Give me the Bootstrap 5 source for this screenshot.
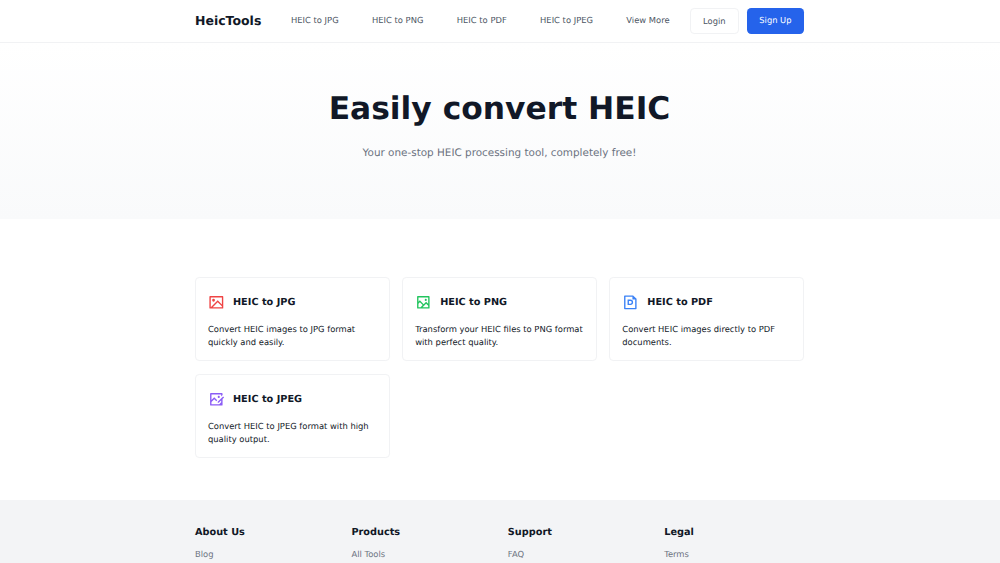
<!DOCTYPE html>
<html lang="en">
<head>
  <meta charset="UTF-8">
  <meta name="viewport" content="width=device-width, initial-scale=1">
  <title>HeicTools</title>
  <!-- Bootstrap CSS -->
  <link href="https://cdn.jsdelivr.net/npm/bootstrap@5.3.0/dist/css/bootstrap.min.css" rel="stylesheet">
  <style>
    /* compact rem, all sizes below scale with it */
    html { font-size: 8.3333px; overflow: hidden; }
    body { font-family: "DejaVu Sans", sans-serif; font-size: 1.006rem; color: #111827; background: #fff; text-rendering: geometricPrecision; padding-right: 1px; }
    a { text-decoration: none; }
    .page-width { width: 609px; margin: 0 auto; }
    .site-header, .hero, .site-footer { margin-right: -1px; padding-right: 1px !important; }
    .site-header { border-bottom: 1px solid #f1f2f4; height: 43px; padding: 8px 0; }
    .brand { font-size: 1.5rem; font-weight: 700; color: #111827; line-height: 3.1rem; width: 11.52rem; }
    .menu-links { gap: 4rem; line-height: 1.5; padding-top: .75rem; }
    .menu-links a { color: #4b5563; white-space: nowrap; }
    .header-actions { gap: 1rem; }
    .btn-login, .btn-signup { font-size: 1rem; line-height: 1.5; border-radius: .5rem; }
    .btn-login { color: #4b5563; border: 1px solid #f1f2f4; padding: .7rem 1.44rem; }
    .btn-signup { color: #fff; background: #2563eb; border: 0; padding: .75rem 1.5rem; }
    .hero { height: 175.6px; padding: 42.6px 0 0; background: linear-gradient(#fff, #f9fafb); }
    .hero h1 { font-size: 3.76rem; font-weight: 700; line-height: 1.5; margin-bottom: 1.5rem; }
    .hero p { font-size: 1.25rem; line-height: 2rem; color: #6b7280; }
    .tools { padding: 7rem 0 0; height: 281.4px; }
    .tool-grid { display: grid; grid-template-columns: repeat(3, 1fr); gap: 1.5rem; }
    .tool-card { border: 1px solid #f1f2f4; border-radius: .5rem; padding: 1.44rem; height: 10.14rem; color: #111827; }
    .tool-head { height: 3rem; gap: 1rem; margin-bottom: 1rem; }
    .tool-head svg { width: 2rem; height: 2rem; }
    .tool-head h2, .site-footer h3 { font-size: 1.17rem; font-weight: 700; line-height: 1.5; margin: 0; }
    .tool-head h2 { padding-top: 1px; }
    .site-footer { background: #f3f4f6; padding: 3.1rem 0 3rem; }
    .footer-grid { display: grid; grid-template-columns: repeat(4, 1fr); gap: 2rem; }
    .site-footer h3 { margin-bottom: .85rem; }
    .site-footer a { color: #6b7280; }
    .icon-red { color: #ef4444; }
    .icon-green { color: #22c55e; }
    .icon-blue { color: #3b82f6; }
    .icon-purple { color: #8b5cf6; }
  </style>
</head>
<body>
  <!-- Header -->
  <header class="site-header">
    <div class="page-width d-flex align-items-start">
      <a class="brand" href="#">HeicTools</a>
      <nav class="menu-links d-flex">
        <a href="#">HEIC to JPG</a>
        <a href="#">HEIC to PNG</a>
        <a href="#">HEIC to PDF</a>
        <a href="#">HEIC to JPEG</a>
        <a href="#">View More</a>
      </nav>
      <div class="d-flex ms-auto header-actions">
        <a class="btn btn-login" href="#">Login</a>
        <a class="btn btn-signup" href="#">Sign Up</a>
      </div>
    </div>
  </header>

  <!-- Hero -->
  <section class="hero text-center">
    <h1>Easily convert HEIC</h1>
    <p class="mb-0">Your one-stop HEIC processing tool, completely free!</p>
  </section>

  <!-- Tools -->
  <main class="tools">
    <div class="page-width tool-grid">
      <a class="tool-card" href="#">
        <div class="tool-head d-flex align-items-center">
          <svg class="icon-red" viewBox="0 0 24 24" fill="currentColor"><path d="M4.828 21l-.02.02-.021-.02H2.992A.993.993 0 0 1 2 20.007V3.993A1 1 0 0 1 2.992 3h18.016c.548 0 .992.445.992.993v16.014a1 1 0 0 1-.992.993H4.828zM20 15V5H4v14L14 9l6 6zm0 2.828l-6-6L6.828 19H20v-1.172zM8 11a2 2 0 1 1 0-4 2 2 0 0 1 0 4z"/></svg>
          <h2>HEIC to JPG</h2>
        </div>
        <p class="mb-0">Convert HEIC images to JPG format quickly and easily.</p>
      </a>
      <a class="tool-card" href="#">
        <div class="tool-head d-flex align-items-center">
          <svg class="icon-green" viewBox="0 0 24 24" fill="currentColor"><path d="M5 11.1l2-2 5.5 5.5 3.5-3.5 3 3V5H5v6.1zm0 2.829V19h3.1l2.986-2.985L7 11.929l-2 2zM10.929 19H19v-2.071l-3-3L10.929 19zM4 3h16a1 1 0 0 1 1 1v16a1 1 0 0 1-1 1H4a1 1 0 0 1-1-1V4a1 1 0 0 1 1-1zm11.5 7a1.5 1.5 0 1 1 0-3 1.5 1.5 0 0 1 0 3z"/></svg>
          <h2>HEIC to PNG</h2>
        </div>
        <p class="mb-0">Transform your HEIC files to PNG format with perfect quality.</p>
      </a>
      <a class="tool-card" href="#">
        <div class="tool-head d-flex align-items-center">
          <svg class="icon-blue" viewBox="0 0 24 24" fill="currentColor"><path d="M12 16H8V8h4a4 4 0 1 1 0 8zm-2-6v4h2a2 2 0 1 0 0-4h-2zm5-6H5v16h14V8h-4V4zM3 2.992C3 2.444 3.447 2 3.999 2H16l5 5v13.993A1 1 0 0 1 20.007 22H3.993A1 1 0 0 1 3 21.008V2.992z"/></svg>
          <h2>HEIC to PDF</h2>
        </div>
        <p class="mb-0">Convert HEIC images directly to PDF documents.</p>
      </a>
      <a class="tool-card" href="#">
        <div class="tool-head d-flex align-items-center">
          <svg class="icon-purple" viewBox="0 0 24 24" fill="currentColor"><path d="M20 3c.552 0 1 .448 1 1v1.757l-2 2V5H5v8.1l4-4 4.328 4.329-1.415 1.413L9 11.93l-4 3.999V19h10.533l.708.001 1.329-1.33L18.9 16.34l.1-.1v-2.93l2-2V20c0 .55-.45 1-1 1H4c-.55 0-1-.45-1-1V4c0-.552.448-1 1-1h16zm1.778 4.808l1.414 1.414L15.414 17l-1.416-.002.002-1.412 7.778-7.778zM15.5 7c.828 0 1.5.672 1.5 1.5s-.672 1.5-1.5 1.5S14 9.328 14 8.5 14.672 7 15.5 7z"/></svg>
          <h2>HEIC to JPEG</h2>
        </div>
        <p class="mb-0">Convert HEIC to JPEG format with high quality output.</p>
      </a>
    </div>
  </main>

  <!-- Footer -->
  <footer class="site-footer">
    <div class="page-width footer-grid">
      <div>
        <h3>About Us</h3>
        <a href="#">Blog</a>
      </div>
      <div>
        <h3>Products</h3>
        <a href="#">All Tools</a>
      </div>
      <div>
        <h3>Support</h3>
        <a href="#">FAQ</a>
      </div>
      <div>
        <h3>Legal</h3>
        <a href="#">Terms</a>
      </div>
    </div>
  </footer>

  <!-- Bootstrap JS Bundle -->
  <script src="https://cdn.jsdelivr.net/npm/bootstrap@5.3.0/dist/js/bootstrap.bundle.min.js"></script>
</body>
</html>
